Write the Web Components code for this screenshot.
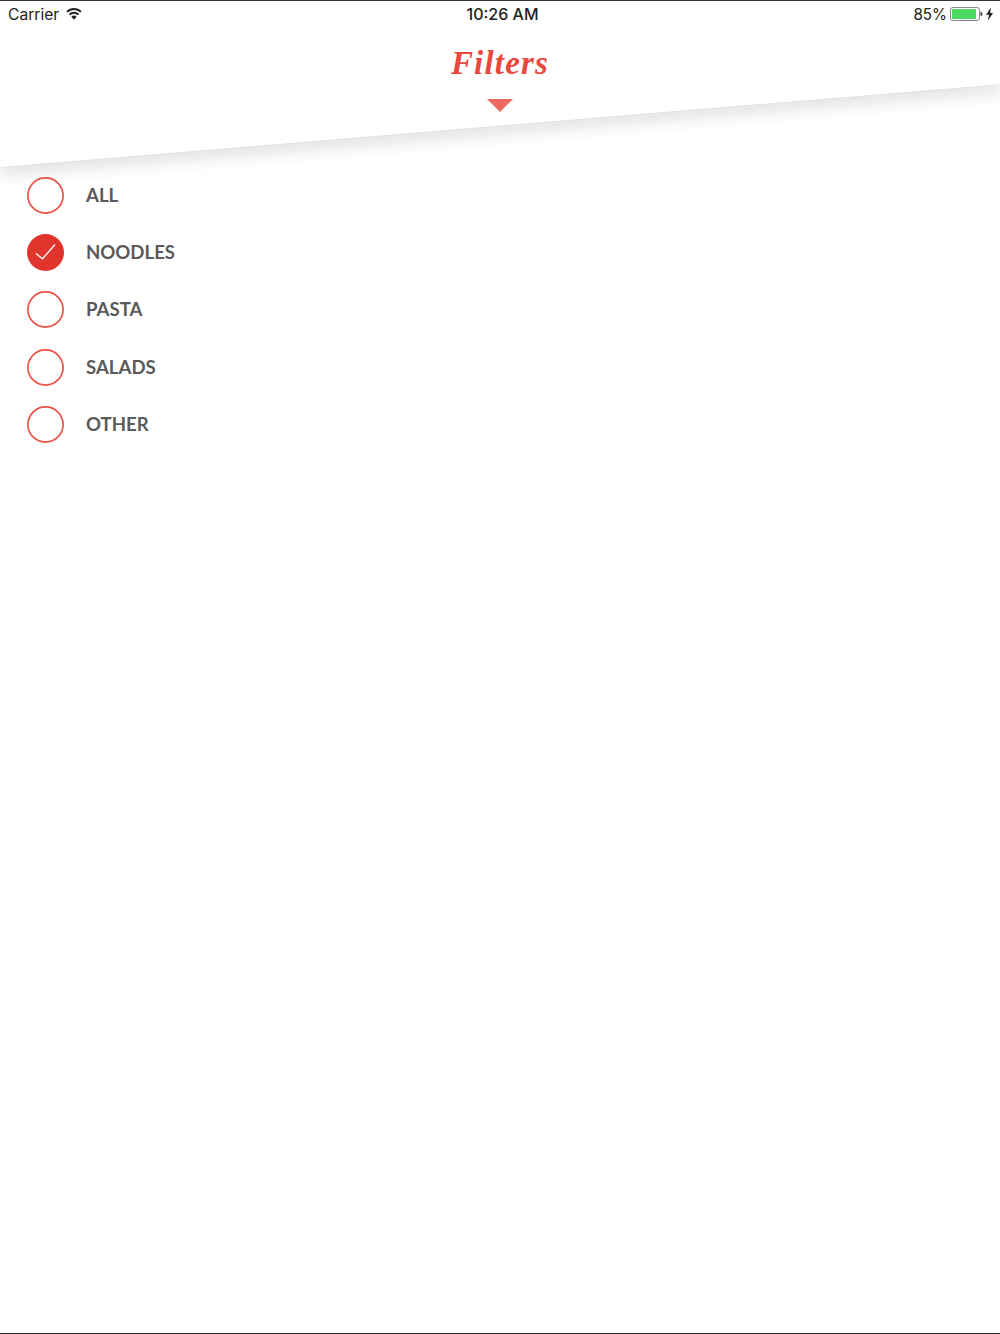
<!DOCTYPE html>
<html>
<head>
<meta charset="utf-8">
<style>
  html, body { margin: 0; height: 100%; background: #fff; }
  body { overflow: hidden; }
</style>
</head>
<body>
<filter-screen>
  <status-bar slot="status" carrier="Carrier" time="10:26 AM" battery="85%"></status-bar>
  <filter-header slot="header" title="Filters"></filter-header>
  <filter-item label="ALL"></filter-item>
  <filter-item label="NOODLES" checked></filter-item>
  <filter-item label="PASTA"></filter-item>
  <filter-item label="SALADS"></filter-item>
  <filter-item label="OTHER"></filter-item>
</filter-screen>

<script>
class FilterScreen extends HTMLElement {
  constructor() {
    super();
    this.attachShadow({ mode: 'open' });
    this.shadowRoot.innerHTML = `
      <style>
        :host {
          display: flex;
          flex-direction: column;
          position: relative;
          box-sizing: border-box;
          width: 1000px;
          height: 1334px;
          border-top: 1px solid #333;
          border-bottom: 1px solid #333;
          background: #fff;
          overflow: hidden;
        }
        .list {
          display: flex;
          flex-direction: column;
          padding: 0 0 0 27.4px;
        }
      </style>
      <slot name="status"></slot>
      <slot name="header"></slot>
      <div class="list"><slot></slot></div>
    `;
  }
}

class StatusBar extends HTMLElement {
  constructor() {
    super();
    this.attachShadow({ mode: 'open' });
    this.shadowRoot.innerHTML = `
      <style>
        :host {
          display: grid;
          grid-template-columns: 1fr auto 1fr;
          align-items: center;
          position: relative;
          z-index: 2;
          height: 26px;
          padding: 0 5px 0 8px;
          font: 15.6px/26px Inter, "Liberation Sans", sans-serif;
          color: #222;
        }
        .left, .right { display: flex; align-items: center; }
        .right { justify-content: flex-end; }
        .carrier { position: relative; top: 1px; }
        .left svg { margin: -1px 0 0 7px; }
        .time { font-weight: 500; font-size: 16px; position: relative; left: 1px; }
        .pct { margin-right: 3px; font-size: 15.2px; position: relative; top: 1px; }
      </style>
      <div class="left">
        <span class="carrier"></span>
        <svg width="16" height="12" viewBox="0 0 17 13">
          <path d="M8.5 12.8 5.6 9.4a4 4 0 0 1 5.8 0Z" fill="#222"/>
          <path d="M3.6 7.2a6.9 6.9 0 0 1 9.8 0M1 4.2a10.6 10.6 0 0 1 15 0" fill="none" stroke="#222" stroke-width="2.1"/>
        </svg>
      </div>
      <div class="time"></div>
      <div class="right">
        <span class="pct"></span>
        <svg width="45" height="14" viewBox="0 0 45 14">
          <rect x="0.5" y="0.5" width="29" height="13" rx="2.5" fill="none" stroke="#888"/>
          <rect x="2" y="2" width="24" height="10" rx="0.5" fill="#4cd964"/>
          <path d="M30.5 4.8c1.3 0 1.9.8 1.9 2.2s-.6 2.2-1.9 2.2Z" fill="#444"/>
          <path d="M41 0.5 36 7.8h3L37.9 13.5 43.1 6h-3Z" fill="#222"/>
        </svg>
      </div>
    `;
    this.shadowRoot.querySelector('.carrier').textContent = this.getAttribute('carrier');
    this.shadowRoot.querySelector('.time').textContent = this.getAttribute('time');
    this.shadowRoot.querySelector('.pct').textContent = this.getAttribute('battery');
  }
}

class FilterHeader extends HTMLElement {
  constructor() {
    super();
    this.attachShadow({ mode: 'open' });
    this.shadowRoot.innerHTML = `
      <style>
        :host {
          display: flex;
          flex-direction: column;
          align-items: center;
          position: relative;
          height: 140px;
          box-sizing: border-box;
          padding-top: 16px;
        }
        h1 {
          position: relative;
          margin: 0;
          font: italic bold 33px/40px "Liberation Serif", serif;
          letter-spacing: 1.2px;
          color: #e8493c;
        }
        .arrow {
          position: relative;
          width: 26px;
          height: 13px;
          margin-top: 16px;
        }
        .edge {
          position: absolute;
          left: 0;
          top: -27px;
          overflow: visible;
        }
      </style>
      <svg class="edge" width="1000" height="210" viewBox="0 0 1000 210">
        <defs>
          <filter id="soft" x="-5%" y="-5%" width="110%" height="130%">
            <feGaussianBlur stdDeviation="8"/>
          </filter>
        </defs>
        <polygon points="0,156 1000,73 1000,93 0,176" fill="#000" opacity="0.11" filter="url(#soft)"/>
        <polygon points="-20,-10 1020,-10 1020,82.6 -20,168.6" fill="#fff"/>
        <line x1="0" y1="167.7" x2="1000" y2="84.7" stroke="#000" stroke-opacity="0.03"/>
      </svg>
      <h1></h1>
      <svg class="arrow" viewBox="0 0 26 13"><polygon points="0,0 26,0 13,13" fill="#ec6a60"/></svg>
    `;
    this.shadowRoot.querySelector('h1').textContent = this.getAttribute('title');
  }
}

class FilterItem extends HTMLElement {
  constructor() {
    super();
    this.attachShadow({ mode: 'open' });
    this.shadowRoot.innerHTML = `
      <style>
        :host {
          display: flex;
          align-items: center;
          gap: 21.6px;
          height: 57.2px;
          font: 700 18.6px/24px Lato, "Liberation Sans", sans-serif;
          color: #5a5a5a;
        }
        .box {
          width: 37px;
          height: 37px;
          flex: none;
        }
        span { margin-top: -1px; }
      </style>
      <svg class="box" viewBox="0 0 37 37"></svg>
      <span></span>
    `;
    this.shadowRoot.querySelector('span').textContent = this.getAttribute('label');
    const box = this.shadowRoot.querySelector('.box');
    box.innerHTML = this.hasAttribute('checked')
      ? `<circle cx="18.5" cy="18.5" r="18.5" fill="#e0342d"/>
         <path d="M9 19.5 15.5 24.8 28 10.5" fill="none" stroke="#fff" stroke-width="1.3"/>`
      : `<circle cx="18.5" cy="18.5" r="17.6" fill="none" stroke="#ec5349" stroke-width="1.7"/>`;
  }
}

customElements.define('filter-screen', FilterScreen);
customElements.define('status-bar', StatusBar);
customElements.define('filter-header', FilterHeader);
customElements.define('filter-item', FilterItem);
</script>
</body>
</html>
